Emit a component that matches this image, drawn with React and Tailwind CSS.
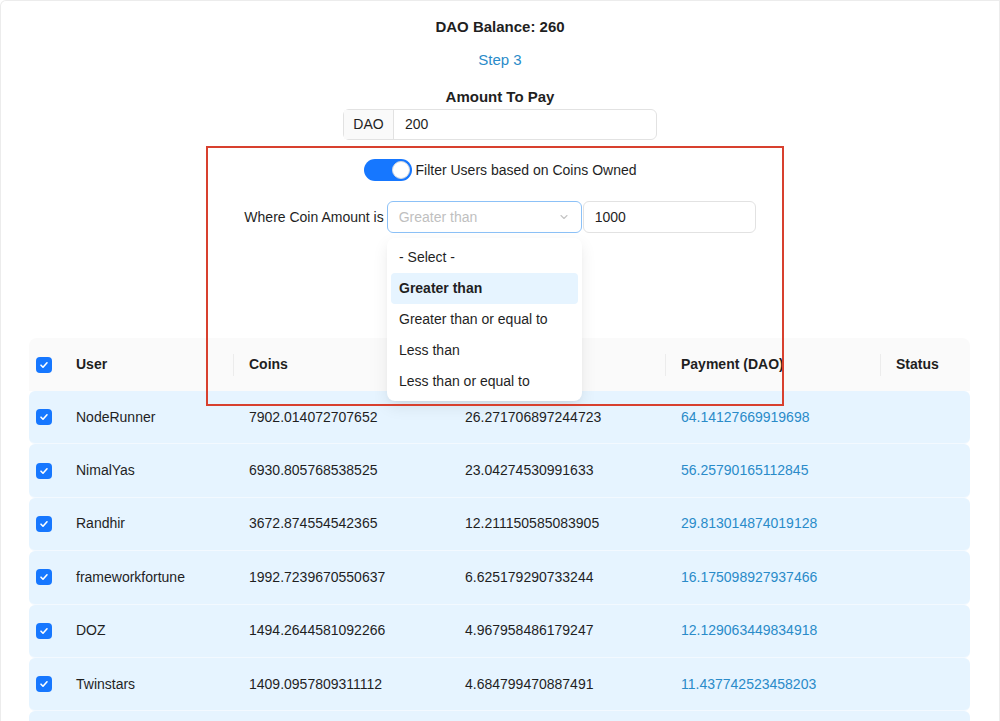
import React from "react";

const rows = [
  ["NodeRunner", "7902.014072707652", "26.271706897244723", "64.14127669919698"],
  ["NimalYas", "6930.805768538525", "23.04274530991633", "56.25790165112845"],
  ["Randhir", "3672.874554542365", "12.211150585083905", "29.813014874019128"],
  ["frameworkfortune", "1992.7239670550637", "6.625179290733244", "16.175098927937466"],
  ["DOZ", "1494.2644581092266", "4.967958486179247", "12.129063449834918"],
  ["Twinstars", "1409.0957809311112", "4.684799470887491", "11.437742523458203"],
];

const cols = "grid grid-cols-[31px_173px_216px_216px_215px_90px]";

function Check() {
  return (
    <span className="flex h-4 w-4 items-center justify-center rounded-[4px] bg-[#1677ff]">
      <svg width="10" height="10" viewBox="0 0 10 10" fill="none">
        <path d="M2 5.2l2 2 4-4.4" stroke="white" strokeWidth="1.6" strokeLinecap="round" strokeLinejoin="round" />
      </svg>
    </span>
  );
}

function Sep() {
  return <span className="absolute left-0 top-1/2 h-[22px] w-px -translate-y-1/2 bg-[#ececec]" />;
}

export default function App() {
  return (
    <div
      className="relative h-[721px] overflow-hidden bg-white text-[14px] text-[#1f1f1f] border-x border-t border-[#ececec] rounded-tl-md"
      style={{ fontFamily: '"Liberation Sans", Arial, sans-serif' }}
    >
      {/* Header */}
      <div className="flex flex-col items-center">
        <div className="mt-[16px] h-5 text-[15px] font-bold leading-5">DAO Balance: 260</div>
        <div className="mt-[13px] h-5 text-[15px] leading-5 text-[#2a8bc9]">Step 3</div>
        <div className="mt-[17px] h-5 text-[15px] font-bold leading-5">Amount To Pay</div>
        <div className="mt-[2px] flex h-[31px] w-[314px] rounded-md border border-[#e2e2e2]">
          <div className="flex w-[50px] items-center justify-center border-r border-[#e2e2e2] bg-[#fafafa]">DAO</div>
          <div className="flex items-center pl-[11px]">200</div>
        </div>

        {/* Filter */}
        <div className="mt-[19px] flex h-[22px] items-center">
          <span className="relative h-[22px] w-[48px] rounded-full bg-[#1677ff]">
            <span className="absolute right-[2px] top-[2px] h-[18px] w-[18px] rounded-full border border-[#d0d7e0] bg-white" />
          </span>
          <span className="ml-[4px]">Filter Users based on Coins Owned</span>
        </div>
        <div className="mt-[20px] flex h-[32px] items-center">
          <span className="mr-[3px]">Where Coin Amount is</span>
          <div className="flex h-[32px] w-[195px] items-center justify-between rounded-[6px] border border-[#8cc1f7] px-[11px] text-[#bfbfbf]">
            <span>Greater than</span>
            <svg width="12" height="12" viewBox="0 0 12 12" fill="none">
              <path d="M3 4.5l3 3 3-3" stroke="#c4c4c4" strokeWidth="1.1" strokeLinecap="round" strokeLinejoin="round" />
            </svg>
          </div>
          <div className="ml-px flex h-[32px] w-[173px] items-center rounded-[6px] border border-[#e2e2e2] px-[11px]">1000</div>
        </div>
      </div>

      {/* Table */}
      <div className="ml-[28px] mt-[105px] w-[941px]">
        <div className={`${cols} h-[53px] items-center rounded-t-lg bg-[#fafafa] font-bold`}>
          <div className="flex justify-end pr-[8px]"><Check /></div>
          <div className="pl-[16px]">User</div>
          <div className="relative pl-[16px]"><Sep />Coins</div>
          <div className="relative pl-[16px]"><Sep />Share (%)</div>
          <div className="relative pl-[16px]"><Sep />Payment (DAO)</div>
          <div className="relative pl-[16px]"><Sep />Status</div>
        </div>
        {rows.map((r) => (
          <div key={r[0]} className={`${cols} h-[53.4px] items-center rounded-md border-b border-[#f3f9ff] bg-[#e6f4ff]`}>
            <div className="flex justify-end pr-[8px]"><Check /></div>
            <div className="pl-[16px]">{r[0]}</div>
            <div className="pl-[16px]">{r[1]}</div>
            <div className="pl-[16px]">{r[2]}</div>
            <div className="pl-[16px] text-[#2a8bc9]">{r[3]}</div>
            <div className="pl-[16px]"></div>
          </div>
        ))}
        <div className="h-[53px] rounded-md bg-[#e6f4ff]" />
      </div>

      {/* Dropdown menu */}
      <div className="absolute left-[386px] top-[237px] w-[195px] rounded-lg bg-white p-[4px] shadow-[0_6px_16px_rgba(0,0,0,0.08),0_3px_6px_-4px_rgba(0,0,0,0.12)]">
        {["- Select -", "Greater than", "Greater than or equal to", "Less than", "Less than or equal to"].map((o) => (
          <div
            key={o}
            className={`flex h-[31px] items-center rounded px-[8px] ${o === "Greater than" ? "bg-[#e6f4ff] font-bold" : ""}`}
          >
            {o}
          </div>
        ))}
      </div>

      {/* Annotation box */}
      <div className="pointer-events-none absolute left-[205px] top-[145px] h-[260px] w-[578px] border-2 border-[#d8402e]" />
    </div>
  );
}
